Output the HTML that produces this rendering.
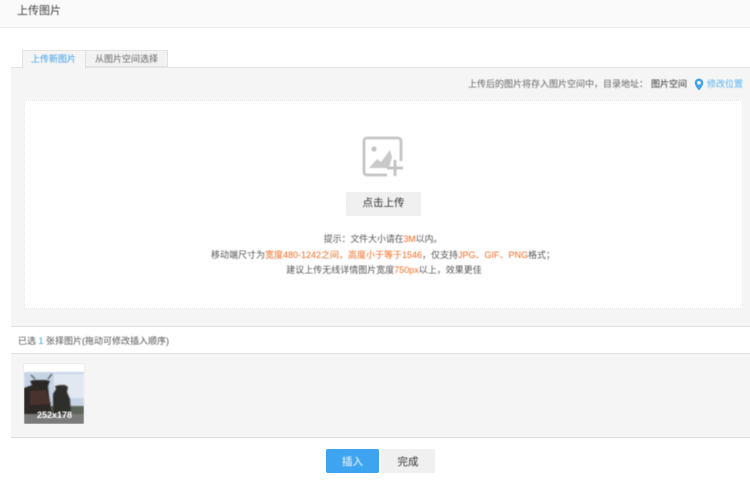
<!DOCTYPE html>
<html lang="zh"><head><meta charset="utf-8"><style>
html,body{margin:0;padding:0;background:#fff}
#p{position:relative;width:750px;height:483px;overflow:hidden;background:#fff;font-family:"Liberation Sans","Noto Sans CJK SC",sans-serif;font-size:9px;color:#555}
#p div{position:absolute;box-sizing:border-box}
.t{white-space:nowrap;filter:blur(.5px)}
.c{left:0;width:766px;text-align:center}
b{font-weight:normal;color:#f26a21}
</style></head><body><div id="p">
<div style="left:0;top:0;width:750px;height:28px;background:#fafafa;border-bottom:1px solid #eee"></div>
<div class="t" style="left:17px;top:3px;font-size:11px;line-height:17px;color:#444">上传图片</div>

<div style="left:11px;top:67px;width:739px;height:260px;background:#f5f5f5;border-top:1px solid #e4e4e4;border-bottom:1px solid #e2e2e2"></div>
<div style="left:22px;top:50px;width:64px;height:19px;background:#f5f5f5;border:1px solid #e2e2e2;border-bottom:0"></div>
<div style="left:86px;top:50px;width:82px;height:17px;background:#f2f2f2;border:1px solid #e2e2e2;border-left:0"></div>
<div class="t" style="left:31px;top:52px;line-height:14px;color:#3d9fe8">上传新图片</div>
<div class="t" style="left:95px;top:52px;line-height:14px;color:#666">从图片空间选择</div>

<div class="t" style="left:468px;top:77px;line-height:14px;color:#666">上传后的图片将存入图片空间中，目录地址：</div>
<div class="t" style="left:651px;top:77px;line-height:14px;color:#333">图片空间</div>
<svg style="position:absolute;left:694px;top:78px;filter:blur(.3px)" width="10" height="13" viewBox="0 0 10 13"><path fill-rule="evenodd" d="M5 .5a4.300 4.300 0 0 0-4.300 4.300C.7 8 5 12.500 5 12.500S9.300 8 9.300 4.800A4.300 4.300 0 0 0 5 .5zm0 2.500a1.800 1.800 0 1 1 0 3.600 1.800 1.800 0 0 1 0-3.600z" fill="#42a5e8"/></svg>
<div class="t" style="left:707px;top:77px;line-height:14px;color:#58b2f0">修改位置</div>

<div style="left:24px;top:100px;width:719px;height:209px;background:#fff;border:1px dotted #e6e6e6"></div>

<svg style="position:absolute;left:362px;top:136px;filter:blur(.5px)" width="43" height="43" viewBox="0 0 43 43">
<path d="M25 39H5a3 3 0 0 1-3-3V5a3 3 0 0 1 3-3h31a3 3 0 0 1 3 3v20" fill="none" stroke="#c4c4c4" stroke-width="2.800"/>
<circle cx="12" cy="13" r="2.600" fill="#c4c4c4"/>
<path d="M7 32l8-9 4 3 9-12 2 7-3 11z" fill="#c9c9c9"/>
<path d="M33 24v16M25 32h16" stroke="#c4c4c4" stroke-width="3" fill="none"/>
</svg>

<div style="left:346px;top:192px;width:75px;height:24px;background:#f0f0f0;border-radius:1px"></div>
<div class="t" style="left:346px;width:75px;text-align:center;top:196px;font-size:10.500px;line-height:15px;color:#333">点击上传</div>

<div class="t c" style="top:232px;line-height:14px;letter-spacing:-.15px">提示：文件大小请在<b>3M</b>以内。</div>
<div class="t c" style="top:248px;line-height:14px">移动端尺寸为<b>宽度480-1242之间，高度小于等于1546</b>，仅支持<b>JPG、GIF、PNG</b>格式；</div>
<div class="t c" style="top:263px;line-height:14px;left:1px">建议上传无线详情图片宽度<b>750px</b>以上，效果更佳</div>

<div class="t" style="left:18px;top:334px;line-height:14px;color:#555">已选 <span style="color:#3d9fe8">1</span> 张择图片(拖动可修改插入顺序)</div>

<div style="left:11px;top:353px;width:739px;height:85px;background:#f5f5f5;border-top:1px solid #e2e2e2;border-bottom:1px solid #dcdcdc"></div>

<div style="left:23px;top:363px;width:62px;height:61px;background:#fff;overflow:hidden;border:1px solid #eee;border-bottom:0">
<svg width="60" height="60" viewBox="0 0 60 60" style="display:block;filter:blur(.7px)">
<rect width="60" height="8" fill="#fff"/>
<rect y="8" width="60" height="37" fill="#c6d4e6"/>
<rect x="30" y="10" width="30" height="24" fill="#e2e8f2"/>
<rect y="42" width="60" height="8" fill="#5c6458"/>
<path d="M7 11l4 4M28 10l-4 5" stroke="#4a4644" stroke-width="1.200"/>
<path d="M0 50V24l8-3-2-4 4-1h12l4 1-2 5 1 9 3 19z" fill="#2b2826"/>
<path d="M6 27l16-1 5 14-21 1z" fill="#4a322e"/>
<path d="M29 50V30l3-5-1-3 5-1 5 0 3 2-1 5 3 7 1 15z" fill="#2e2e2a"/>
<rect y="50" width="60" height="10" fill="#7a7a7a"/>
</svg>
</div>
<div class="t" style="left:37px;top:408px;line-height:14px;color:#fff;font-weight:bold;font-size:9px">252x178</div>

<div style="left:326px;top:449px;width:53px;height:24px;background:#3fa4ef;border-radius:2px"></div>
<div class="t" style="left:326px;width:53px;text-align:center;top:455px;font-size:10.500px;line-height:14px;color:#fff">插入</div>
<div style="left:381px;top:449px;width:54px;height:24px;background:#f0f0f0;border-radius:2px"></div>
<div class="t" style="left:381px;width:54px;text-align:center;top:455px;font-size:10.500px;line-height:14px;color:#333">完成</div>
</div></body></html>
